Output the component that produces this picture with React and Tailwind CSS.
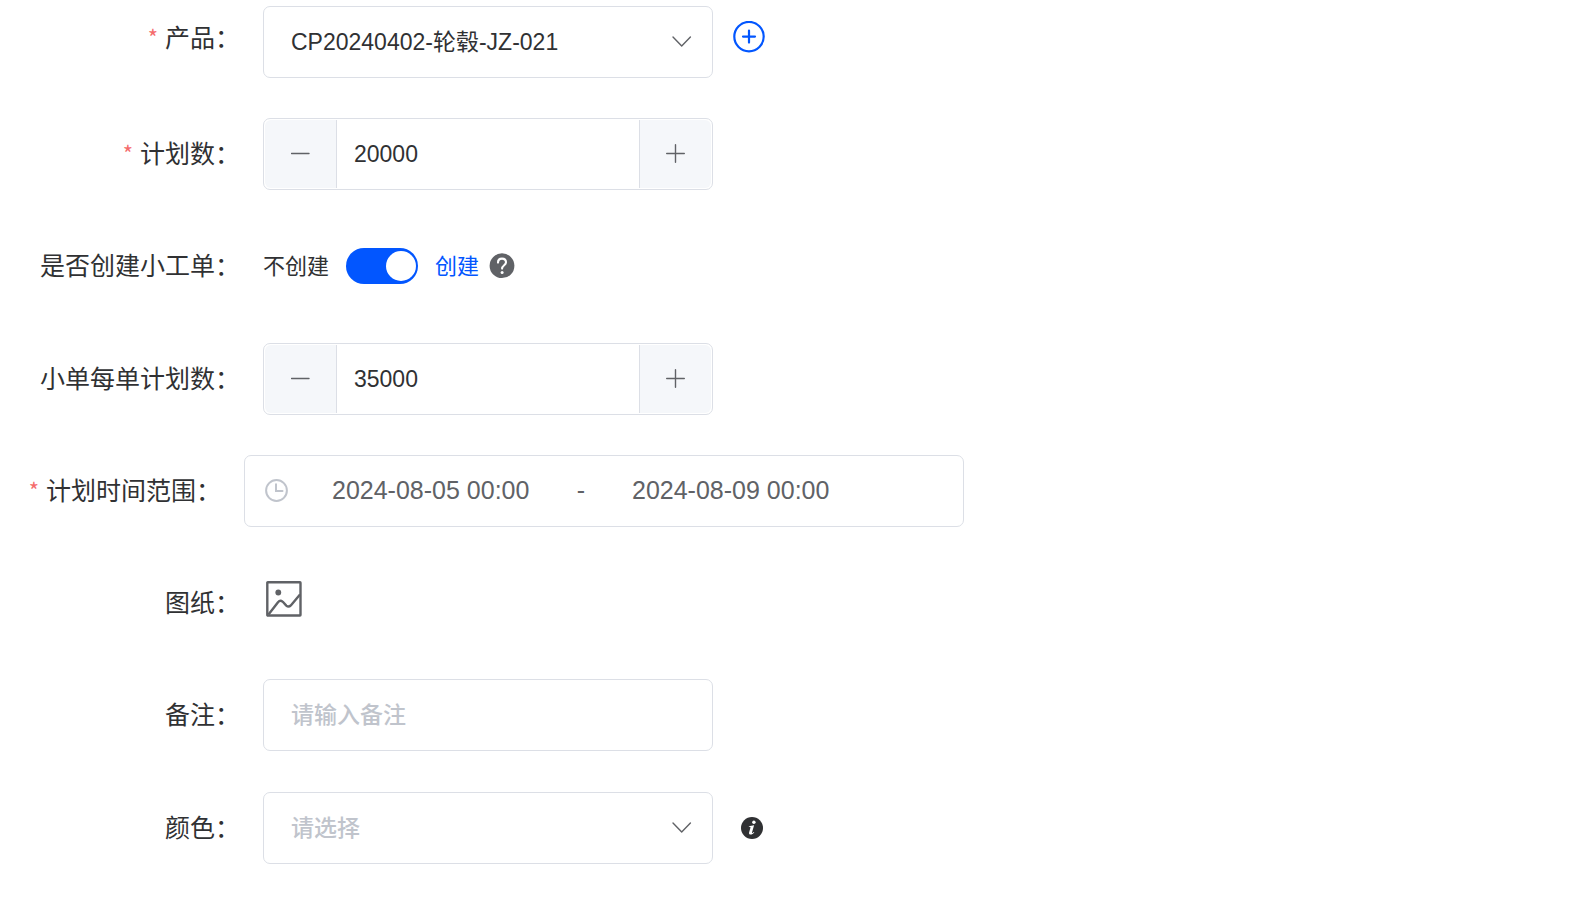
import { useState } from "react";

const box = "rounded-[7px] border border-[#dcdfe6] bg-white";

function Row({ label, htmlFor, required, narrow, top, tall, children }) {
  return (
    <div className={`flex items-start ${tall ? "min-h-[73px]" : "min-h-[72px]"}`}>
      <div
        className={`flex shrink-0 items-center justify-end ${narrow ? "w-[221px]" : "w-[240px]"} ${top ? "h-16" : "h-[72px]"}`}
      >
        {required && (
          <span className="mr-[7px] pb-1 font-['Noto_Sans_CJK_SC',sans-serif] text-[22px] leading-8 text-[#f56c6c]">*</span>
        )}
        <label htmlFor={htmlFor} className="whitespace-nowrap text-[25px] leading-8">
          {label}：
        </label>
      </div>
      <div className="flex min-w-0 grow items-start pl-[23px]">{children}</div>
    </div>
  );
}

function Select({ id, placeholder, options, initial = "" }) {
  const [value, setValue] = useState(initial);
  return (
    <div className="relative w-full max-w-[450px]">
      <select
        id={id}
        value={value}
        onChange={(e) => setValue(e.target.value)}
        className={`h-[72px] w-full appearance-none pl-[27px] pr-14 text-[23px] outline-none ${box} ${value ? "text-[#303133]" : "font-medium text-[#c0c4cc]"}`}
      >
        {placeholder && <option value="">{placeholder}</option>}
        {options.map((o) => (
          <option key={o} value={o}>
            {o}
          </option>
        ))}
      </select>
      <svg
        viewBox="0 0 20 12"
        className="pointer-events-none absolute right-[21px] top-[30px] h-3 w-5"
        fill="none"
        stroke="#606266"
        strokeWidth="1.4"
        strokeLinecap="round"
        strokeLinejoin="round"
      >
        <path d="M1 1l8.700 9L18.400 1" />
      </svg>
    </div>
  );
}

function NumberField({ id, initial }) {
  const [value, setValue] = useState(initial);
  const step = (n) => setValue((v) => String(Math.max(0, Number(v) + n)));
  const btn = "flex w-[72px] shrink-0 items-center justify-center bg-[#f5f7fa]";
  return (
    <div className={`flex h-[72px] w-full max-w-[450px] p-px ${box}`}>
      <button type="button" aria-label="减少" onClick={() => step(-1)} className={`${btn} rounded-l-md border-r border-[#dcdfe6]`}>
        <svg viewBox="1 0 20 20" className="size-5" stroke="#606266" strokeWidth="1.4" strokeLinecap="round">
          <path d="M1.500 9.500h17.500" />
        </svg>
      </button>
      <input
        id={id}
        type="text"
        inputMode="numeric"
        value={value}
        onChange={(e) => setValue(e.target.value)}
        className="min-w-0 grow px-[17px] text-[23px] text-[#303133] outline-none"
      />
      <button type="button" aria-label="增加" onClick={() => step(1)} className={`${btn} rounded-r-md border-l border-[#dcdfe6]`}>
        <svg viewBox="0 0 20 20" className="size-5" stroke="#606266" strokeWidth="1.4" strokeLinecap="round">
          <path d="M0.700 9.500h17.600M9.500 0.700v17.600" />
        </svg>
      </button>
    </div>
  );
}

export default function App() {
  const [create, setCreate] = useState(true);
  const [start, setStart] = useState("2024-08-05 00:00");
  const [end, setEnd] = useState("2024-08-09 00:00");
  const [remark, setRemark] = useState("");
  return (
    <form
      onSubmit={(e) => e.preventDefault()}
      className="flex flex-col gap-10 bg-white pb-8 pt-1.5 font-['Liberation_Sans','Noto_Sans_CJK_SC',sans-serif] text-[#303133]"
    >
      <Row label="产品" htmlFor="product" required top>
        <Select id="product" initial="CP20240402-轮毂-JZ-021" options={["CP20240402-轮毂-JZ-021"]} />
        <div className="flex h-[62px] items-center pl-5">
          <button type="button" aria-label="添加产品">
            <svg viewBox="0 0 32 32" className="size-8" fill="none" stroke="#0256ff" strokeWidth="2.2" strokeLinecap="round">
              <circle cx="16" cy="15.600" r="14.700" />
              <path d="M10 15.600h12M16 9.600v12" />
            </svg>
          </button>
        </div>
      </Row>

      <Row label="计划数" htmlFor="plan" required>
        <NumberField id="plan" initial="20000" />
      </Row>

      <Row label="是否创建小工单" htmlFor="create" tall>
        <div className="flex h-[72px] items-center text-[22px]">
          <span className={create ? "" : "text-[#0256ff]"}>不创建</span>
          <input
            id="create"
            type="checkbox"
            role="switch"
            checked={create}
            onChange={(e) => setCreate(e.target.checked)}
            className="mx-[17px] flex h-9 w-[72px] appearance-none items-center rounded-full bg-[#dcdfe6] p-0.5 pl-[3px] before:size-[30px] before:rounded-full before:bg-white checked:justify-end checked:bg-[#0256ff]"
          />
          <span className={create ? "text-[#0256ff]" : ""}>创建</span>
          <svg viewBox="0 0 26 26" className="ml-2.5 size-[26px]" fill="none">
            <circle cx="13" cy="12.700" r="12.400" fill="#606266" />
            <path d="M9 9.600c0-2.500 1.700-4 4-4s4 1.500 4 3.700c0 2.900-3.900 3-3.900 6.300" stroke="#fff" strokeWidth="2.1" strokeLinecap="round" />
            <circle cx="13.100" cy="19.400" r="1.500" fill="#fff" />
          </svg>
        </div>
      </Row>

      <Row label="小单每单计划数" htmlFor="sub">
        <NumberField id="sub" initial="35000" />
      </Row>

      <Row label="计划时间范围" htmlFor="start" required narrow>
        <div className={`flex h-[72px] w-full max-w-[720px] items-center pl-5 text-[25px] text-[#606266] ${box}`}>
          <svg viewBox="0 0 24 24" className="size-6 shrink-0" fill="none" stroke="#c0c4cc" strokeWidth="2">
            <circle cx="11.500" cy="11.500" r="10.400" />
            <path d="M11 5.200v6.800h6.500" strokeLinecap="round" />
          </svg>
          <input
            id="start"
            value={start}
            onChange={(e) => setStart(e.target.value)}
            className="ml-6 w-[236px] min-w-0 px-[19px] outline-none"
          />
          <span className="w-16 shrink-0 text-center">-</span>
          <input
            aria-label="结束时间"
            value={end}
            onChange={(e) => setEnd(e.target.value)}
            className="w-[236px] min-w-0 px-[19px] outline-none"
          />
        </div>
      </Row>

      <Row label="图纸" htmlFor="drawing">
        <button id="drawing" type="button" aria-label="查看图纸" className="flex h-16 items-center pl-[3px]">
          <svg viewBox="0 0 36 36" className="size-9" fill="none" stroke="#606266" strokeWidth="2.4" strokeLinejoin="round">
            <rect x="1.300" y="1.300" width="33.200" height="33.200" rx="0.5" />
            <path d="M2.500 33.500L12 21.200Q14.200 18.600 16.800 20.800L20.300 24.600Q22.600 26.600 24.800 24.400L34 13.500" />
            <circle cx="12.300" cy="11.500" r="2.900" fill="#606266" stroke="none" />
          </svg>
        </button>
      </Row>

      <Row label="备注" htmlFor="remark" tall>
        <input
          id="remark"
          value={remark}
          placeholder="请输入备注"
          onChange={(e) => setRemark(e.target.value)}
          className={`h-[72px] w-full max-w-[450px] px-[27px] text-[23px] outline-none placeholder:font-medium placeholder:text-[#c0c4cc] ${box}`}
        />
      </Row>

      <Row label="颜色" htmlFor="color">
        <Select id="color" placeholder="请选择" options={["红色", "黑色", "银色"]} />
        <div className="flex h-[72px] items-center pl-7">
          <svg viewBox="0 0 22 22" className="size-[22px]">
            <circle cx="11" cy="11" r="11" fill="#303133" />
            <circle cx="12.900" cy="5.200" r="1.700" fill="#fff" />
            <path d="M7.800 9.300l5.300-1-2.100 7.300c-.2.9.7.6 1.800-.6l.5.5c-1.700 2.300-5.900 3.300-5.200 0l1.400-5c.1-.5-.5-.7-1.600-.7z" fill="#fff" />
          </svg>
        </div>
      </Row>
    </form>
  );
}
